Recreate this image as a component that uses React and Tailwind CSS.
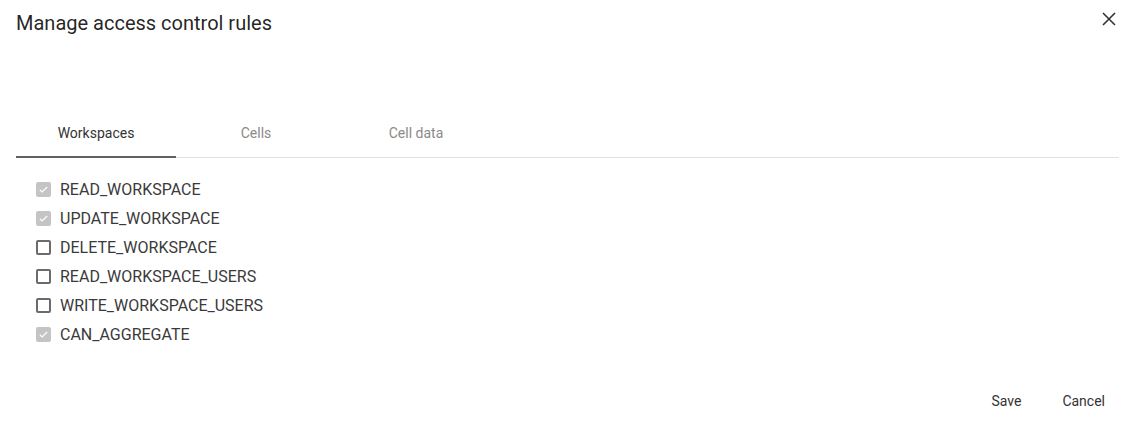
import { useState } from "react";

const perms = [
  { name: "READ_WORKSPACE", checked: true },
  { name: "UPDATE_WORKSPACE", checked: true },
  { name: "DELETE_WORKSPACE", checked: false },
  { name: "READ_WORKSPACE_USERS", checked: false },
  { name: "WRITE_WORKSPACE_USERS", checked: false },
  { name: "CAN_AGGREGATE", checked: true },
];

const tabs = ["Workspaces", "Cells", "Cell data"];

function Box({ checked }) {
  if (checked) {
    return (
      <span className="flex h-[15px] w-[15px] items-center justify-center rounded-[2px] bg-[#c4c4c4]">
        <svg width="11" height="11" viewBox="0 0 24 24" fill="none" stroke="white" strokeWidth="2.5">
          <path d="M4 12.5l5 5L20 6.5" />
        </svg>
      </span>
    );
  }
  return <span className="h-[15px] w-[15px] rounded-[2px] border-2 border-[#6b6b6b]" />;
}

export default function App() {
  const [tab, setTab] = useState(0);

  return (
    <div className="h-[434px] w-[1135px] bg-white font-['Roboto',sans-serif] text-[#212121]">
      <div className="flex items-start justify-between pl-4 pr-[19px] pt-[11px]">
        <div className="text-[20px] leading-[24px] text-[rgba(0,0,0,0.87)]">Manage access control rules</div>
        <button className="mt-[1px] text-[#333]">
          <svg width="14" height="14" viewBox="0 0 14 14" stroke="currentColor" strokeWidth="1.6">
            <path d="M1 1l12 12M13 1L1 13" />
          </svg>
        </button>
      </div>

      <div className="mx-4 mt-[75px] flex border-b border-[#e0e0e0]">
        {tabs.map((t, i) => (
          <button
            key={t}
            onClick={() => setTab(i)}
            className={
              "-mb-px h-[48px] w-[160px] border-b-2 text-[14px] " +
              (tab === i ? "border-[#616161] text-[#333]" : "border-transparent text-[#8a8a8a]")
            }
          >
            {t}
          </button>
        ))}
      </div>

      <div className="ml-9 mt-[17px] flex flex-col">
        {perms.map((p) => (
          <label key={p.name} className="flex h-[29px] items-center gap-[9px]">
            <Box checked={p.checked} />
            <span className="text-[16px] text-[#3a3a3a]">{p.name}</span>
          </label>
        ))}
      </div>

      <div className="mt-[34px] flex justify-end gap-[9px] pr-[14px]">
        <button className="h-[36px] px-[16px] text-[14px] text-[#333]">Save</button>
        <button className="h-[36px] px-[16px] text-[14px] text-[#333]">Cancel</button>
      </div>
    </div>
  );
}
